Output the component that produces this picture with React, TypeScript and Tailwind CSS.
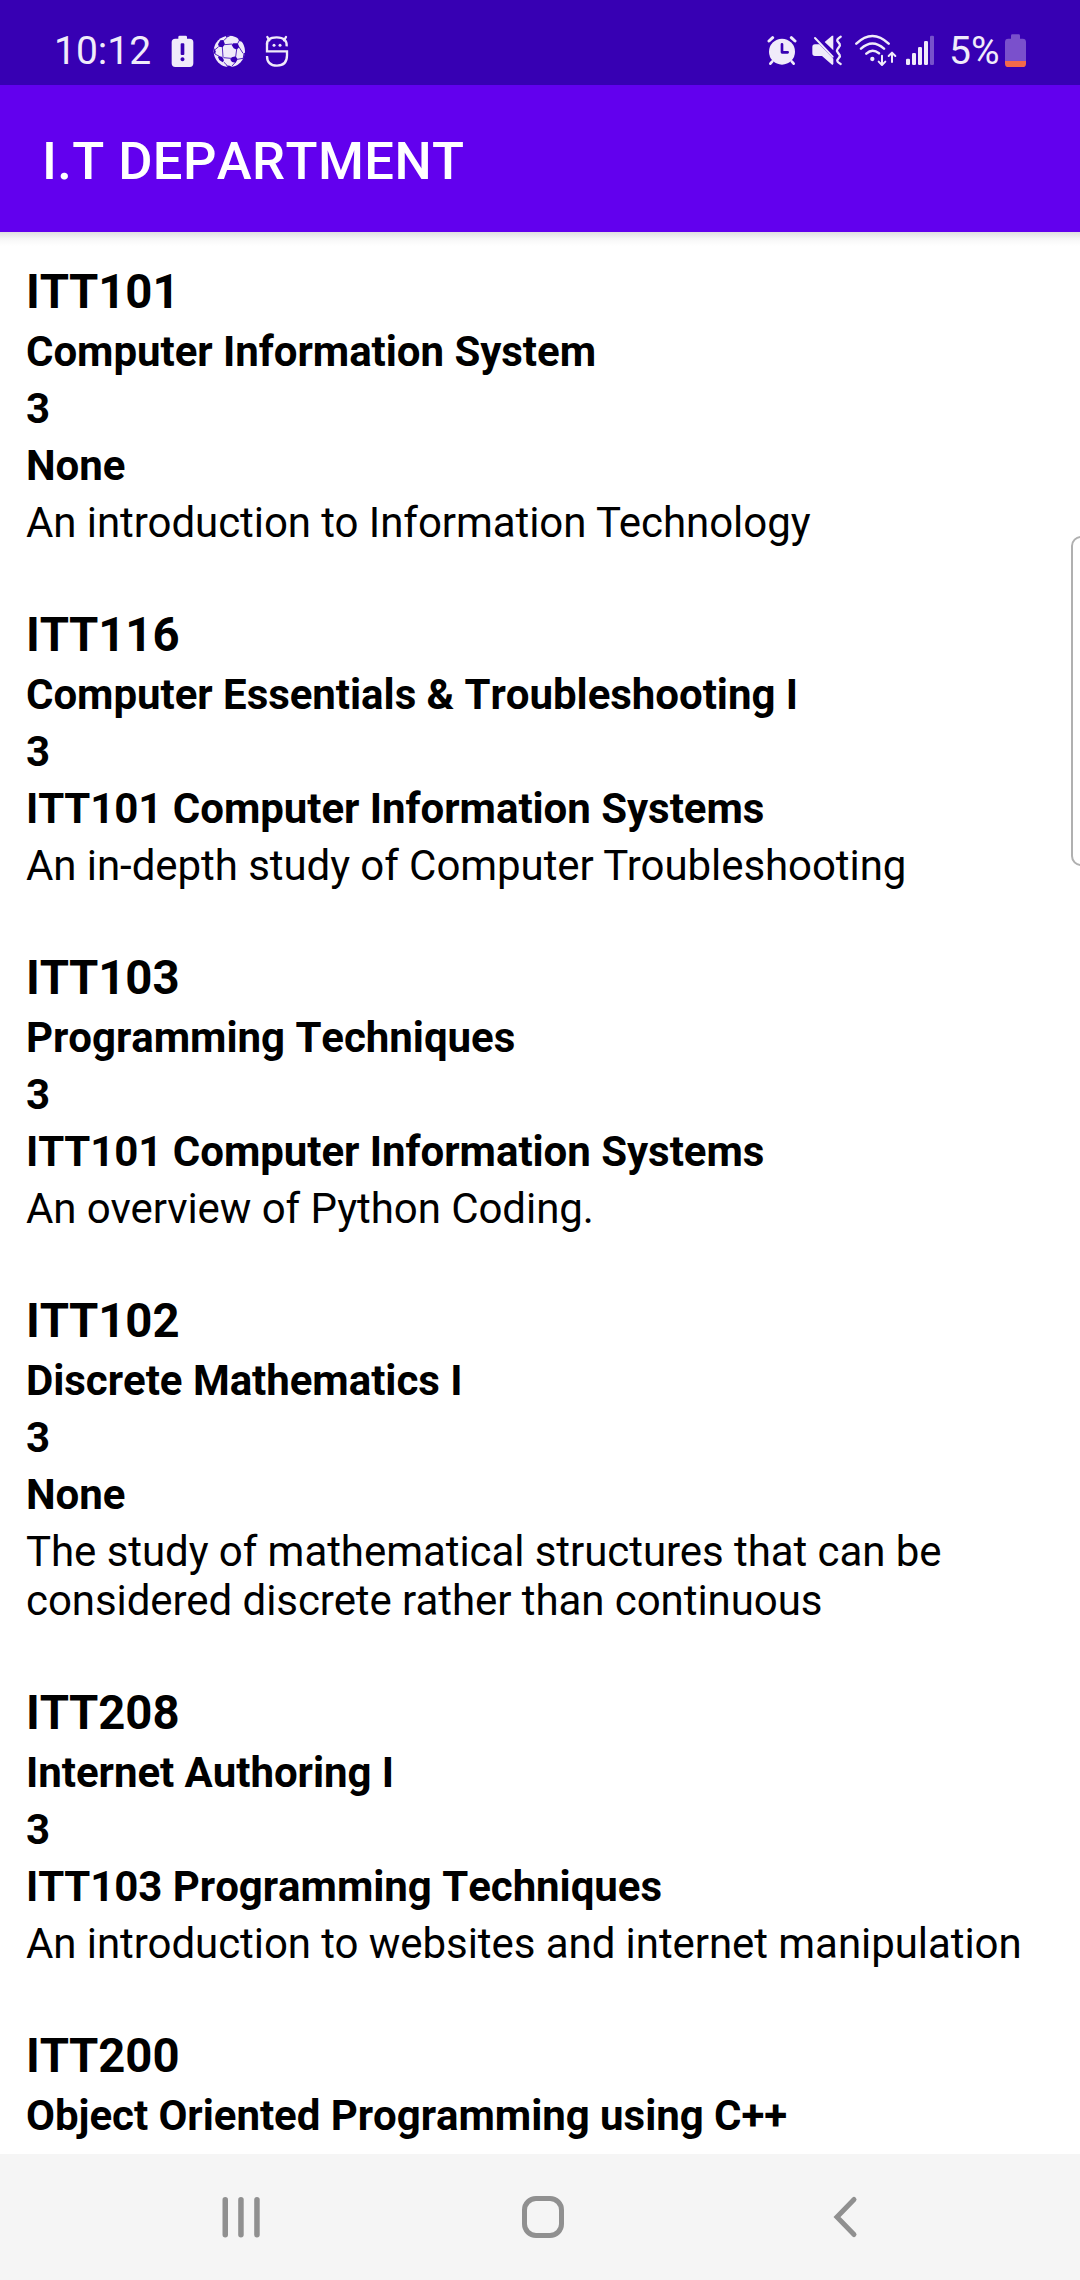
import React from "react";

type Course = {
  code: string;
  title: string;
  credits?: string;
  prerequisite?: string;
  description?: string;
};

const courses: Course[] = [
  {
    code: "ITT101",
    title: "Computer Information System",
    credits: "3",
    prerequisite: "None",
    description: "An introduction to Information Technology",
  },
  {
    code: "ITT116",
    title: "Computer Essentials & Troubleshooting I",
    credits: "3",
    prerequisite: "ITT101 Computer Information Systems",
    description: "An in-depth study of Computer Troubleshooting",
  },
  {
    code: "ITT103",
    title: "Programming Techniques",
    credits: "3",
    prerequisite: "ITT101 Computer Information Systems",
    description: "An overview of Python Coding.",
  },
  {
    code: "ITT102",
    title: "Discrete Mathematics I",
    credits: "3",
    prerequisite: "None",
    description:
      "The study of mathematical structures that can be considered discrete rather than continuous",
  },
  {
    code: "ITT208",
    title: "Internet Authoring I",
    credits: "3",
    prerequisite: "ITT103 Programming Techniques",
    description: "An introduction to websites and internet manipulation",
  },
  {
    code: "ITT200",
    title: "Object Oriented Programming using C++",
  },
];

function BatteryAlertIcon() {
  return (
    <svg className="ml-[20px] h-[35px] w-[24px]" viewBox="393 39 72 105" fill="#f0ebfa">
      <path
        fillRule="evenodd"
        d="M415 56V51q0-4 4-4h18q4 0 4 4v5h8q11 0 11 11v63q0 11-11 11h-43q-11 0-11-11V67q0-11 11-11zM422 73v29q0 3 3 3h5q3 0 3-3V73q0-3-3-3h-5q-3 0-3 3zM427.500 112a6 6 0 1 0 .01 0z"
      />
    </svg>
  );
}

function SoccerIcon() {
  return (
    <svg className="ml-[17px] h-[35px] w-[34px]" viewBox="516 39 102 105">
      <circle cx="568" cy="94" r="47" fill="#f0ebfa" />
      <g fill="#3700b3">
        <path d="M541 61l9-1 5 13-7 9-11-2-3-7z" />
        <path d="M580 70l13 0 5 11-8 8-9-4-6-10z" />
        <path d="M575 112l12-3 6 9-6 10-11-2-5-7z" />
        <path d="M537 108l10 3 5 10-4 6-10-7-4-8z" />
        <path d="M523 84l4 10-1 9-5-3z" />
        <path d="M591 51l9 6 6 8-8-2z" />
        <path d="M611 99l4 0-2 12-5 6z" />
        <path d="M558 48l14-2-5 4-9 1z" />
        <path d="M558 136l11 1 8 4-14 0z" />
      </g>
      <g stroke="#3700b3" strokeWidth="2.500" fill="none">
        <path d="M554 74l23-2M547 81l2 30M590 88l-3 22M573 115l-23-2M551 62l12-12M593 71l5-10M597 81l12 19M592 118l17-3M586 127l-10 11M551 126l10 10M538 109l-13-7M536 80l-11 9" />
      </g>
    </svg>
  );
}

function MascotIcon() {
  return (
    <svg className="ml-[19px] h-[35px] w-[24px]" viewBox="674 39 72 105" fill="none" stroke="#f0ebfa" strokeWidth="7">
      <path d="M739 79q2-27-30-27t-29 25v17h60v12q0 31-30 31t-30-29" />
      <path d="M681 51l6 10M737 51l-6 10" strokeWidth="7" strokeLinecap="round" />
      <circle cx="701" cy="76" r="4.500" fill="#f0ebfa" stroke="none" />
      <circle cx="719" cy="76" r="4.500" fill="#f0ebfa" stroke="none" />
    </svg>
  );
}

function AlarmIcon() {
  return (
    <svg className="h-[35px] w-[30px]" viewBox="50 39 90 105" fill="none" stroke="#f0ebfa" strokeLinecap="round">
      <circle cx="95" cy="95" r="39" fill="#f0ebfa" stroke="none" />
      <path d="M56 63l11-10M134 63l-11-10" strokeWidth="9" />
      <path d="M66 124l-6 7M124 124l6 7" strokeWidth="8" />
      <path d="M95 73v24h17" stroke="#3700b3" strokeWidth="8" strokeLinejoin="round" />
    </svg>
  );
}

function MuteVibrateIcon() {
  return (
    <svg className="ml-[14px] h-[35px] w-[32px]" viewBox="182 39 96 105">
      <g fill="#f0ebfa">
        <path d="M194 73h13l42 43v16l-3 3-31-27h-21q-8 0-8-8V81q0-8 8-8z" />
        <path d="M223 66l22-19h4v44z" />
      </g>
      <path d="M194 54l53 56" stroke="#f0ebfa" strokeWidth="6" strokeLinecap="round" />
      <path
        d="M271 50q-12 7-10 13l7 9q2 5-2 9l-5 7q-3 4 1 9l6 8q2 4-2 8l-5 7q-2 5 10 12"
        fill="none"
        stroke="#f0ebfa"
        strokeWidth="7"
        strokeLinecap="round"
      />
    </svg>
  );
}

function WifiIcon() {
  return (
    <svg className="ml-[11px] h-[35px] w-[43px]" viewBox="313 39 129 105" fill="none" stroke="#f0ebfa" strokeWidth="7.500" strokeLinecap="round">
      <path d="M320 71q48-46 97 0M334 86q34-31 69 0M350 101q18-17 38-1" />
      <circle cx="368" cy="117" r="6.500" fill="#f0ebfa" stroke="none" />
      <path d="M397 107v26M387 125l10 10 10-10M427 126V99M417 108l10-10 10 10" strokeWidth="6" strokeLinejoin="round" />
    </svg>
  );
}

function SignalIcon() {
  return (
    <svg className="ml-[8px] h-[35px] w-[30px]" viewBox="465 39 90 105" fill="#f0ebfa">
      <rect x="468" y="116" width="12" height="19" rx="4" />
      <rect x="486" y="99" width="12" height="36" rx="4" />
      <rect x="504" y="81" width="12" height="54" rx="4" />
      <rect x="522" y="63" width="12" height="72" rx="4" />
      <rect x="540" y="47" width="12" height="88" rx="4" opacity="0.35" />
    </svg>
  );
}

function BatteryLowIcon() {
  return (
    <svg className="ml-[5px] h-[35px] w-[23px]" viewBox="762 39 69 105">
      <path
        d="M783 56V47q0-4 4-4h19q4 0 4 4v9h8q10 0 10 10v57h-63V66q0-10 10-10z"
        fill="#7a50cc"
      />
      <path d="M765 123h63v8q0 10-10 10h-43q-10 0-10-10z" fill="#f4694b" />
    </svg>
  );
}

function StatusBar() {
  return (
    <header className="flex h-[85px] shrink-0 items-start bg-[#3700b3] pt-[33px] text-[#f0ebfa]">
      <div className="flex h-[35px] items-center pl-[54px]">
        <span className="w-[97px] whitespace-nowrap pt-[1px] text-[39px] leading-[35px]">10:12</span>
        <BatteryAlertIcon />
        <SoccerIcon />
        <MascotIcon />
      </div>
      <div className="ml-auto flex h-[35px] items-center pr-[53px]">
        <AlarmIcon />
        <MuteVibrateIcon />
        <WifiIcon />
        <SignalIcon />
        <span className="ml-[14px] w-[50px] whitespace-nowrap pt-[1px] text-[39px] leading-[35px]">5%</span>
        <BatteryLowIcon />
      </div>
    </header>
  );
}

function CourseItem({ course }: { course: Course }) {
  return (
    <li className="text-[42px] leading-[57px] tracking-[-0.04px]">
      <h2 className="mb-[2px] pt-[1px] text-[47.25px] font-bold leading-[57px]">{course.code}</h2>
      <p className="font-bold">{course.title}</p>
      {course.credits && <p className="font-bold">{course.credits}</p>}
      {course.prerequisite && <p className="font-bold">{course.prerequisite}</p>}
      {course.description && (
        <p className="py-[4px] leading-[49px] tracking-[-0.06px] [font-kerning:normal]">
          {course.description}
        </p>
      )}
    </li>
  );
}

function NavigationBar() {
  return (
    <nav className="flex h-[126px] shrink-0 items-center bg-[#f5f5f5] pl-[220px]">
      <svg className="h-[44px] w-[42px]" viewBox="0 0 42 44" fill="#909090">
        <rect x="2.500" y="2" width="5.500" height="40.500" rx="2.750" />
        <rect x="18.200" y="2" width="5.500" height="40.500" rx="2.750" />
        <rect x="34.200" y="2" width="5.500" height="40.500" rx="2.750" />
      </svg>
      <svg className="ml-[259px] h-[44px] w-[44px]" viewBox="0 0 44 44" fill="none" stroke="#909090" strokeWidth="5">
        <rect x="3.500" y="3.500" width="37" height="37" rx="11.500" />
      </svg>
      <svg className="ml-[267px] h-[44px] w-[28px]" viewBox="0 0 28 44" fill="none" stroke="#909090" strokeWidth="5" strokeLinecap="round">
        <path d="M22 4.500L5 22l17 17.500" />
      </svg>
    </nav>
  );
}

export default function App() {
  return (
    <div className="relative flex h-[2280px] w-[1080px] flex-col overflow-hidden bg-white font-['Roboto',sans-serif] text-black [font-kerning:none]">
      <StatusBar />
      <div className="flex h-[147px] shrink-0 items-center bg-[#6200ee] pl-[42px] pt-[4px]">
        <h1 className="text-[52.5px] font-medium leading-[62px] tracking-[0.42px] text-white">
          I.T DEPARTMENT
        </h1>
      </div>
      <div className="h-[14px] shrink-0 bg-linear-to-b from-[#e0e0e0] via-[#f7f7f7] to-white" />
      <main className="min-h-0 flex-1 px-[26px] pt-[17px]">
        <ul className="flex flex-col gap-[55px]">
          {courses.map((course) => (
            <CourseItem key={course.code} course={course} />
          ))}
        </ul>
      </main>
      <NavigationBar />
      <div className="absolute -right-[12px] top-[536px] h-[330px] w-[21px] rounded-[10px] border-2 border-[#b0b0b0] bg-white" />
    </div>
  );
}
